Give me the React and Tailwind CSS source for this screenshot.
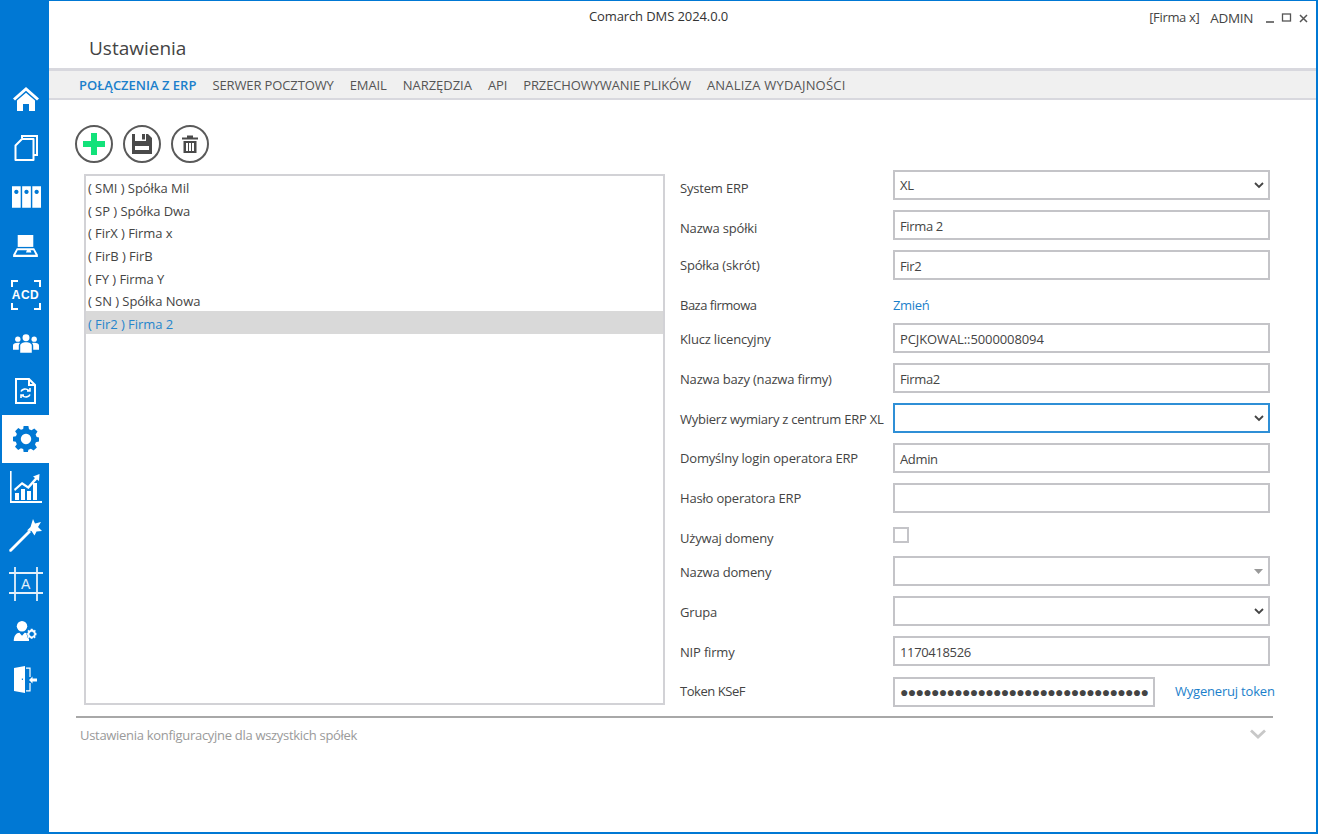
import React from "react";

const W = "#ffffff";
const BLUE = "#0078d4";

const Home = () => (
  <svg width="28" height="28" viewBox="0 0 28 28" fill={W}>
    <path d="M14 2 L1 13.5 L3 15.5 L14 5.8 L25 15.5 L27 13.5 Z" />
    <path d="M5 15.5 L14 7.8 L23 15.5 V26 H17 V19 H11 V26 H5 Z" />
  </svg>
);
const Docs = () => (
  <svg width="26" height="28" viewBox="0 0 26 28" fill="none" stroke={W} strokeWidth="2">
    <path d="M9 4.5 V2 H24 V21 H21" />
    <path d="M9 5 H20.5 V26 H2.5 V11.5 Z" strokeLinejoin="round" />
  </svg>
);
const Binders = () => (
  <svg width="29" height="22" viewBox="0 0 30 22" fill={W} className="ml-[1px]">
    <path fillRule="evenodd" d="M0 0H9V22H0ZM4.5 3.5a2.2 2.2 0 1 0 .01 0Z" />
    <path fillRule="evenodd" d="M10.5 0H19.5V22H10.5ZM15 3.5a2.2 2.2 0 1 0 .01 0Z" />
    <path fillRule="evenodd" d="M21 0H30V22H21ZM25.5 3.5a2.2 2.2 0 1 0 .01 0Z" />
  </svg>
);
const Scanner = () => (
  <svg width="25" height="22" viewBox="0 0 27 24" fill={W}>
    <path d="M5 0H22V13H5Z" />
    <path fillRule="evenodd" d="M4 14.5H23L27 21.5V24H0V21.5ZM5 16.5L2.5 21.5H24.5L22 16.5H19L20 19H14L15 16.5Z" />
  </svg>
);
const Acd = () => (
  <div className="relative w-[30px] h-[30px] flex items-center justify-center">
    <svg className="absolute inset-0" width="30" height="30" viewBox="0 0 30 30" fill="none" stroke={W} strokeWidth="2">
      <path d="M1 7V1H7M23 1H29V7M1 23V29H7M23 29H29V23" />
    </svg>
    <span className="text-white font-bold text-[12px] leading-none tracking-[0.5px] font-['Liberation_Sans',sans-serif]">ACD</span>
  </div>
);
const Users = () => (
  <svg width="26" height="19" viewBox="0 0 27 19" fill={W}>
    <circle cx="5" cy="5" r="2.8" />
    <circle cx="22" cy="5" r="2.8" />
    <circle cx="13.5" cy="3.6" r="3.6" />
    <path d="M0 16V11.5C0 9.5 2 8.6 5 8.6C6 8.6 6.6 8.7 7.3 9C6.3 10 6 11 6 12V16Z" />
    <path d="M27 16V11.5C27 9.5 25 8.6 22 8.6C21 8.6 20.4 8.7 19.7 9C20.7 10 21 11 21 12V16Z" />
    <path d="M7.5 19V12C7.5 9.5 10 8.2 13.5 8.2C17 8.2 19.5 9.5 19.5 12V19Z" />
  </svg>
);
const DocSync = () => (
  <svg width="21" height="26" viewBox="0 0 21 26" fill="none" stroke={W} strokeWidth="2">
    <path d="M1 1H14L20 7V25H1Z" />
    <path d="M14 1V7H20" />
    <path d="M6 13.5C7 11 11 10 14 12.5M15 10V13H12M15 16.5C14 19 10 20 7 17.5M6 20V17H9" strokeWidth="1.6" />
  </svg>
);
const Gear = ({ color = BLUE, size = 26 }) => (
  <svg width={size} height={size} viewBox="0 0 26 26" fill={color}>
    <path fillRule="evenodd" d="M10.6 0H15.4L16 3.3L18.5 4.3L21.3 2.4L24.5 5.6L22.6 8.4L23.7 11L26 11.4V15.6L22.9 16.2L22 18.6L23.9 21.4L20.6 24.6L17.9 22.7L15.4 23.7L14.9 26H10.6L10.2 23.1L7.9 22.2L5.2 24L2 20.8L3.8 18.2L2.8 15.7L0 15.2V10.8L2.9 10.3L3.9 7.9L2.1 5.2L5.3 2.1L8 3.8L10.2 2.9ZM13 7.8A5.2 5.2 0 1 0 13.01 7.8Z" />
  </svg>
);
const Chart = () => (
  <svg width="32" height="32" viewBox="0 0 32 32" fill={W}>
    <path d="M0 0H1.6V30H32V32H0Z" />
    <path d="M5 22H9V29H5ZM11 18H15V29H11ZM17 20H21V29H17ZM23 12H27V29H23Z" />
    <path d="M4 18L12 11L18 15L25 7L23 5.5L29.5 3L29 10L27 8.5L18.5 18L12 13.8L5 20Z" />
  </svg>
);
const Wand = () => (
  <svg width="33" height="33" viewBox="0 0 33 33" fill={W}>
    <path d="M0.5 30.5L20 11L22 13L2.5 32.5Q1.5 33 0.5 32.5Q0 31.5 0.5 30.5Z" />
    <path d="M24 0L26 4.5L32 3L29 8L33 12L27.5 12.5L25.5 16.5L22.5 12L18 11.5L21.5 8Z" />
  </svg>
);
const Frame = () => (
  <div className="relative w-[34px] h-[34px] flex items-center justify-center">
    <svg className="absolute inset-0" width="34" height="34" viewBox="0 0 34 34" stroke="#e4f0fa" strokeWidth="1.8">
      <path d="M0 6H34M0 26H34M6 0V34M28 0V34" />
    </svg>
    <span className="text-[#e4f0fa] text-[14px] leading-none font-['Liberation_Sans',sans-serif]">A</span>
  </div>
);
const AdminGear = () => (
  <svg width="25" height="20" viewBox="0 0 27 23" fill={W}>
    <circle cx="9.5" cy="6" r="6" />
    <path d="M0 23C0 17 3 13.5 6.5 13.5L9.5 17L12.5 13.5C15 13.5 16.5 15 17.5 17V23Z" />
    <path fillRule="evenodd" d="M20.5 8.5L22 8.8L22.6 10.4L24.4 10L25.6 11.3L24.9 12.9L26.5 14V16L24.9 17L25.4 18.8L24 20L22.5 19.2L21.5 20.8H19.5L18.6 19.2L17 19.9L15.6 18.6L16.3 17L15 16V14L16.3 13L15.7 11.3L17 10L18.6 10.6L19.4 9ZM20.7 12.6A2.4 2.4 0 1 0 20.71 12.6Z" stroke={BLUE} strokeWidth="0.6" />
  </svg>
);
const Exit = () => (
  <svg width="23" height="27" viewBox="0 0 23 27" fill={W}>
    <path fillRule="evenodd" d="M0 2L11 0V27L0 25ZM8.4 12.5a.7.7 0 1 0 .01 0Z" />
    <path d="M12 1.5H16.6V11H15.4V2.7H12ZM12 24.3H15.4V17H16.6V25.5H12Z" />
    <path d="M15 14L18.5 10.5V12.5H23V15.5H18.5V17.5Z" />
  </svg>
);

const nav = [
  { c: <Home />, h: 48.5 },
  { c: <Docs />, h: 49 },
  { c: <Binders />, h: 48.5 },
  { c: <Scanner />, h: 49.5 },
  { c: <Acd />, h: 49 },
  { c: <Users />, h: 47.5 },
  { c: <DocSync />, h: 48 },
  { c: <Gear />, h: 48, active: true },
  { c: <Chart />, h: 48.5 },
  { c: <Wand />, h: 48 },
  { c: <Frame />, h: 48 },
  { c: <AdminGear />, h: 47.5 },
  { c: <Exit />, h: 48 },
];

const tabs = [
  { t: "POŁĄCZENIA Z ERP", c: "font-semibold text-[#1b7fcb] tracking-[0px]" },
  { t: "SERWER POCZTOWY", c: "text-[#555] tracking-[-0.12px]" },
  { t: "EMAIL", c: "text-[#555] tracking-[-0.12px]" },
  { t: "NARZĘDZIA", c: "text-[#555] tracking-[-0.02px]" },
  { t: "API", c: "text-[#555] tracking-[-0.12px]" },
  { t: "PRZECHOWYWANIE PLIKÓW", c: "text-[#555] tracking-[-0.12px]" },
  { t: "ANALIZA WYDAJNOŚCI", c: "text-[#555] tracking-[0.2px]" },
];
const list = ["( SMI ) Spółka Mil", "( SP ) Spółka Dwa", "( FirX ) Firma x", "( FirB ) FirB", "( FY ) Firma Y", "( SN ) Spółka Nowa", "( Fir2 ) Firma 2"];

const Chevron = () => (
  <svg width="10" height="7" viewBox="0 0 10 7" fill="none" stroke="#444" strokeWidth="1.8">
    <path d="M1 1L5 5L9 1" />
  </svg>
);

const Box = ({ children, focus, className = "" }) => (
  <div className={`h-[30px] flex items-center pl-[5px] pr-[4px] border-2 bg-white text-[#444] ${focus ? "border-[#2f8fd6]" : "border-[#c4c4c8]"} ${className}`}>
    {children}
  </div>
);
const Sel = ({ value, focus }) => (
  <Box focus={focus} className="w-full justify-between">
    <span className="translate-y-[1px]">{value}</span>
    <Chevron />
  </Box>
);
const Inp = ({ value, tr = "tracking-[-0.35px]" }) => (
  <Box className="w-full">
    <span className={`translate-y-[2px] ${tr}`}>{value}</span>
  </Box>
);

const Row = ({ label, children, h = "h-[30px]", shift = "translate-y-[2px]", lt = "tracking-[-0.18px]" }) => (
  <div className={`flex items-center ${h}`}>
    <label className={`w-[213px] shrink-0 text-[#444] ${lt} ${shift}`}>{label}</label>
    <div className="w-[377px] shrink-0">{children}</div>
  </div>
);

const Circle = ({ children }) => (
  <div className="w-[38px] h-[38px] rounded-full border-2 border-[#5a5a5a] flex items-center justify-center">{children}</div>
);

export default function App() {
  return (
    <div className="w-[1318px] h-[834px] flex overflow-hidden bg-white text-[13px] font-['Open_Sans','Noto_Sans',sans-serif] tracking-[-0.35px] text-[#444]">
      <aside className="w-[49px] shrink-0 bg-[#0078d4] flex flex-col pt-[75px] pl-[2px]">
        {nav.map((n, i) => (
          <div key={i} className={`w-[47px] shrink-0 flex items-center justify-center ${n.active ? "bg-white" : ""}`} style={{ height: n.h }}>
            {n.c}
          </div>
        ))}
      </aside>
      <main className="flex-1 min-w-0 flex flex-col border-t border-r-2 border-b-2 border-[#0078d4]">
        <header className="h-[26px] shrink-0 flex items-center relative">
          <div className="flex-1 text-center text-[#333] pr-[48px] mt-[6px] tracking-[-0.1px]">Comarch DMS 2024.0.0</div>
          <div className="absolute right-[12px] top-[7px] flex items-center text-[#444]">
            <span className="mr-[11px]">[Firma x]</span>
            <span className="mr-[13px] text-[13.5px]">ADMIN</span>
            <svg width="42" height="12" viewBox="4 0 42 12" fill="none" stroke="#555" strokeWidth="1.3" className="mr-[-4px]">
              <path d="M4 10H12" strokeWidth="1.6" />
              <rect x="20.5" y="2" width="8" height="7" />
              <path d="M38 3L45 10M45 3L38 10" strokeWidth="1.5" />
            </svg>
          </div>
        </header>
        <div className="h-[41px] shrink-0 pl-[40px] pt-[2px] flex items-center text-[19px] text-[#444] tracking-normal leading-none">Ustawienia</div>
        <nav className="h-[32px] shrink-0 bg-[#f0f0f0] border-t-[3px] border-b-2 border-[#d8d8de] flex items-center pl-[30px] pt-[2px] gap-[16px]">
          {tabs.map((x) => (
            <span key={x.t} className={x.c}>{x.t}</span>
          ))}
        </nav>
        <div className="flex pl-[26px] pt-[25px] gap-[10px]">
          <Circle>
            <svg width="22" height="22" viewBox="0 0 22 22" fill="#12e27a"><path d="M8 0H14V8H22V14H14V22H8V14H0V8H8Z" /></svg>
          </Circle>
          <Circle>
            <svg width="20" height="20" viewBox="0 0 20 20" fill="#4a4a4a"><path fillRule="evenodd" d="M0 0H3V7H14V0H16L20 4V20H0ZM3 12V16H17V12ZM10 0H13V5.5H10Z" /></svg>
          </Circle>
          <Circle>
            <svg width="16" height="18" viewBox="0 0 16 18" fill="#4a4a4a"><path fillRule="evenodd" d="M0 2.5H5V0.5H11V2.5H16V4.5H0ZM1.5 6H14.5V18H1.5ZM4 8V16H6V8ZM7 8V16H9V8ZM10 8V16H12V8Z" /></svg>
          </Circle>
        </div>
        <div className="flex pl-[35px] pt-[11px]">
          <div className="w-[581px] h-[531px] shrink-0 border-2 border-[#d2d2d6]">
            <div className="-mt-[1px]">
              {list.map((t, i) => (
                <div key={t} className={`h-[22.67px] flex items-center pl-[2px] pt-[5px] tracking-[-0.05px] ${i === 6 ? "bg-[#d9d9d9] text-[#2585cc]" : "text-[#444]"}`}>{t}</div>
              ))}
            </div>
          </div>
          <div className="ml-[15px] -mt-[4px] flex flex-col gap-[10px]">
            <Row label="System ERP" shift="translate-y-[4px]"><Sel value="XL" /></Row>
            <Row label="Nazwa spółki" shift="translate-y-[4px]"><Inp value="Firma 2" /></Row>
            <Row label="Spółka (skrót)" shift="translate-y-[1px]"><Inp value="Fir2" /></Row>
            <Row label="Baza firmowa" h="h-[23px]" shift="translate-y-[4px]" lt="tracking-[-0.5px]"><span className="text-[#1b7fcb] relative top-[4px]">Zmień</span></Row>
            <Row label="Klucz licencyjny" shift="translate-y-[2px]"><Inp value="PCJKOWAL::5000008094" tr="tracking-[-0.1px]" /></Row>
            <Row label="Nazwa bazy (nazwa firmy)" shift="translate-y-[2px]"><Inp value="Firma2" /></Row>
            <Row label="Wybierz wymiary z centrum ERP XL" shift="translate-y-[2px]" lt="tracking-[-0.24px]"><Sel value="" focus /></Row>
            <Row label="Domyślny login operatora ERP" shift="translate-y-[1px]"><Inp value="Admin" /></Row>
            <Row label="Hasło operatora ERP" shift="translate-y-[1px]"><Inp value="" /></Row>
            <Row label="Używaj domeny" h="h-[23px]" shift="translate-y-[4px]">
              <div className="w-[16px] h-[16px] border-2 border-[#c4c4c8]" />
            </Row>
            <Row label="Nazwa domeny" shift="translate-y-[2px]">
              <Box className="w-full justify-end">
                <svg width="9" height="5" viewBox="0 0 9 5" fill="#999" className="mr-[1px]"><path d="M0 0H9L4.5 5Z" /></svg>
              </Box>
            </Row>
            <Row label="Grupa" shift="translate-y-[2px]"><Sel value="" /></Row>
            <Row label="NIP firmy" shift="translate-y-[2px]"><Inp value="1170418526" /></Row>
            <Row label="Token KSeF" shift="translate-y-[1px]" lt="tracking-[-0.45px]">
              <div className="flex items-center w-[400px] mt-[1px]">
                <Box className="w-[262px] overflow-hidden shrink-0 text-[#333] text-[14px] tracking-[-0.7px]">{"●".repeat(32)}</Box>
                <span className="ml-[20px] text-[#1b7fcb] whitespace-nowrap tracking-[-0.2px]">Wygeneruj token</span>
              </div>
            </Row>
          </div>
        </div>
        <div className="ml-[27px] mr-[43px] mt-[10px] border-t-2 border-[#a8a8a8] h-[34px] flex items-center justify-between pl-[4px] pr-[7px]">
          <span className="text-[#9a9a9a] tracking-[-0.3px] translate-y-[2px]">Ustawienia konfiguracyjne dla wszystkich spółek</span>
          <svg width="16" height="10" viewBox="0 0 16 10" fill="none" stroke="#c8c8c8" strokeWidth="2.8"><path d="M1 1.5L8 8L15 1.5" /></svg>
        </div>
      </main>
    </div>
  );
}
